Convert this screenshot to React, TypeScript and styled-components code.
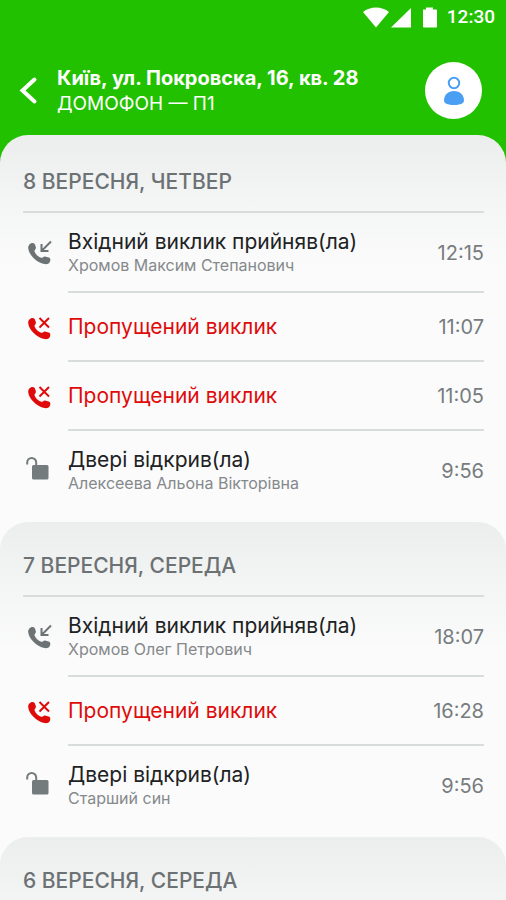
import React from "react";
import styled, { createGlobalStyle } from "styled-components";

const GlobalStyle = createGlobalStyle`
  * { box-sizing: border-box; }
  body {
    margin: 0;
    background: #fbfbfb;
    font-family: Inter, Roboto, "Open Sans", sans-serif;
    color: #202223;
  }
  h1, h2, p, ul { margin: 0; padding: 0; }
  ul { list-style: none; }
`;

const Screen = styled.div`
  display: flex;
  flex-direction: column;
  height: 100vh;
  overflow: hidden;
`;

const Top = styled.header`
  flex: none;
  background: #22c100;
  color: #ffffff;
  padding-bottom: 48px;
  margin-bottom: -32px;
`;

const StatusBar = styled.div`
  display: flex;
  align-items: center;
  justify-content: flex-end;
  height: 34px;
  padding-right: 11px;
  font: 500 19px/24px Roboto, sans-serif;
`;

const StatusIcons = styled.svg`
  display: block;
  margin-right: 9px;
`;

const TitleBar = styled.div`
  display: flex;
  align-items: center;
  height: 85px;
  padding: 28px 24px 0 16px;
`;

const BackButton = styled.button`
  flex: none;
  display: flex;
  align-items: center;
  width: 41px;
  height: 40px;
  padding: 0;
  border: 0;
  background: none;
  color: inherit;
  cursor: pointer;
`;

const Titles = styled.div`
  flex: 1;
  min-width: 0;
  white-space: nowrap;
`;

const Address = styled.h1`
  font-size: 20px;
  line-height: 26px;
  font-weight: 700;
`;

const Device = styled.p`
  font-size: 19px;
  line-height: 26px;
`;

const ProfileButton = styled.button`
  flex: none;
  display: flex;
  align-items: center;
  justify-content: center;
  width: 57px;
  height: 57px;
  padding: 0;
  border: 0;
  border-radius: 50%;
  background: #ffffff;
  cursor: pointer;
`;

const Days = styled.main`
  flex: 1;
  display: flex;
  flex-direction: column;
`;

const Day = styled.section`
  flex: none;
  padding: 0 22px 13px 23px;
  border-radius: 28px 28px 0 0;
  background: linear-gradient(#eceeee 0, #fbfbfb 130px);

  &:first-child { padding-top: 3px; }
`;

const DayTitle = styled.h2`
  padding: 31px 0 16px;
  border-bottom: 2px solid #d9dcdc;
  font-size: 21px;
  line-height: 26px;
  font-weight: 500;
  color: #6c7173;
  white-space: nowrap;
`;

const EventRow = styled.li`
  display: flex;
  align-items: center;
`;

const IconBox = styled.span`
  flex: none;
  width: 45px;
  height: 32px;
`;

const EventBody = styled.div<{ $tall: boolean }>`
  flex: 1;
  min-width: 0;
  display: flex;
  align-items: center;
  justify-content: space-between;
  height: ${({ $tall }) => ($tall ? 80 : 69)}px;
  padding-top: ${({ $tall }) => ($tall ? 2 : 0)}px;
  border-bottom: 2px solid #d9dcdc;

  li:last-child > & { border-bottom: 0; height: 78px; }
`;

const EventTitle = styled.p<{ $missed: boolean }>`
  font-size: 21px;
  line-height: 24px;
  color: ${({ $missed }) => ($missed ? "#df0b0b" : "#202223")};
  white-space: nowrap;
`;

const Person = styled.p`
  font-size: 16px;
  line-height: 22px;
  color: #85898b;
  white-space: nowrap;
`;

const Time = styled.time`
  font-size: 20px;
  line-height: 24px;
  color: #777c7e;
`;

type Kind = "answered" | "missed" | "door";
type CallEvent = { kind: Kind; time: string; person?: string };

const titles: Record<Kind, string> = {
  answered: "Вхідний виклик прийняв(ла)",
  missed: "Пропущений виклик",
  door: "Двері відкрив(ла)",
};

const days: { title: string; events: CallEvent[] }[] = [
  {
    title: "8 ВЕРЕСНЯ, ЧЕТВЕР",
    events: [
      { kind: "answered", person: "Хромов Максим Степанович", time: "12:15" },
      { kind: "missed", time: "11:07" },
      { kind: "missed", time: "11:05" },
      { kind: "door", person: "Алексеева Альона Вікторівна", time: "9:56" },
    ],
  },
  {
    title: "7 ВЕРЕСНЯ, СЕРЕДА",
    events: [
      { kind: "answered", person: "Хромов Олег Петрович", time: "18:07" },
      { kind: "missed", time: "16:28" },
      { kind: "door", person: "Старший син", time: "9:56" },
    ],
  },
  { title: "6 ВЕРЕСНЯ, СЕРЕДА", events: [] },
];

function EventIcon({ kind }: { kind: Kind }) {
  if (kind === "door") {
    return (
      <svg width="32" height="32" viewBox="0 0 32 32" aria-hidden="true">
        <path d="M4.200 10.500V8.500a4.500 4.500 0 0 1 9 0V12" fill="none" stroke="#747b7d" strokeWidth="2" />
        <rect x="9" y="11" width="16.500" height="14.500" rx="1.500" fill="#747b7d" />
      </svg>
    );
  }
  const color = kind === "missed" ? "#df0b0b" : "#6d7375";
  return (
    <svg width="32" height="32" viewBox="0 0 32 32" aria-hidden="true">
      <path
        fill={color}
        d="M6.200 7.700C7.600 5.800 10.500 5.200 11.700 7L12.900 10.200C13.400 11.700 11.200 13 11.500 14.300C12.300 17.200 15.300 19.900 18.200 20.700C19.500 21 20.500 19.200 22 19.400L25.600 20.500C27.500 21.100 27.600 22.500 27.100 24.200C26.500 26.500 24.600 27.500 21.500 27.100C13.400 25.900 5.600 17.200 5.200 11.100C5.100 9.800 5.300 8.800 6.200 7.700Z"
      />
      <path
        d={kind === "missed" ? "M16.500 6l9.500 9.500M26 6l-9.500 9.500" : "M28 4.500L18.500 14M18.500 7V14H25.500"}
        fill="none"
        stroke={color}
        strokeWidth="2"
      />
    </svg>
  );
}

export default function App() {
  return (
    <Screen>
      <GlobalStyle />
      <Top>
        <StatusBar>
          <StatusIcons width="75" height="22" viewBox="0 0 75 22" fill="#ffffff" aria-hidden="true">
            <path d="M0 6C7 0 19 0 26 6L13 21.500Z" />
            <path d="M48 2V21.500H28Z" />
            <path d="M60 3.500h3V1.500h7v2h3a1 1 0 0 1 1 1V20.500a1 1 0 0 1-1 1H61a1 1 0 0 1-1-1Z" />
          </StatusIcons>
          <span>12:30</span>
        </StatusBar>
        <TitleBar>
          <BackButton type="button" aria-label="Назад">
            <svg width="24" height="32" viewBox="0 0 24 32" aria-hidden="true">
              <path d="M18.500 4.500L6.500 15.500L18.500 26.500" fill="none" stroke="#ffffff" strokeWidth="4" strokeLinecap="round" strokeLinejoin="miter" />
            </svg>
          </BackButton>
          <Titles>
            <Address>Київ, ул. Покровска, 16, кв. 28</Address>
            <Device>ДОМОФОН — П1</Device>
          </Titles>
          <ProfileButton type="button" aria-label="Профіль">
            <svg width="24" height="30" viewBox="0 0 24 30" aria-hidden="true">
              <circle cx="12" cy="7" r="5.200" fill="none" stroke="#4a9ff5" strokeWidth="2" />
              <path d="M12 15c6 0 10 4 10 9.500C22 27.500 18 29 12 29S2 27.500 2 24.500C2 19 6 15 12 15Z" fill="#4a9ff5" />
            </svg>
          </ProfileButton>
        </TitleBar>
      </Top>
      <Days>
        {days.map((day) => (
          <Day key={day.title}>
            <DayTitle>{day.title}</DayTitle>
            <ul>
              {day.events.map((event) => (
                <EventRow key={event.time}>
                  <IconBox>
                    <EventIcon kind={event.kind} />
                  </IconBox>
                  <EventBody $tall={Boolean(event.person)}>
                    <div>
                      <EventTitle $missed={event.kind === "missed"}>{titles[event.kind]}</EventTitle>
                      {event.person && <Person>{event.person}</Person>}
                    </div>
                    <Time>{event.time}</Time>
                  </EventBody>
                </EventRow>
              ))}
            </ul>
          </Day>
        ))}
      </Days>
    </Screen>
  );
}
